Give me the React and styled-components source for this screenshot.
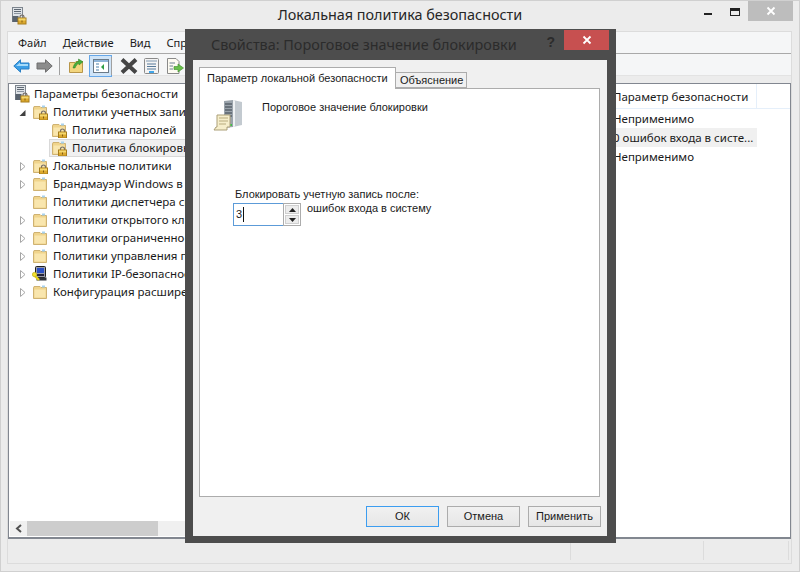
import React from 'react'
import styled, { createGlobalStyle } from 'styled-components'

const GlobalStyle = createGlobalStyle`
html, body { margin: 0; padding: 0; }
body { width: 800px; height: 572px; overflow: hidden; background: #ececec; font-family: "Noto Sans", "Open Sans", sans-serif; font-size: 11.5px; color: #1a1a1a; }
`

function Lock({ x = 0, y = 0 }) {
    return (
        <g transform={`translate(${x} ${y})`}>
            <path d="M2.5 4V2.6C2.5 1.2 3.4.5 4.5.5s2 .7 2 2.1V4" fill="none" stroke="#77706a" strokeWidth="1.2" />
            <rect x="0.5" y="3.5" width="8" height="6" fill="#dca92f" stroke="#a67c1c" />
            <rect x="1" y="4" width="7" height="2" fill="#f4d76e" />
            <rect x="4" y="6" width="1" height="2" fill="#7d5c16" />
        </g>
    )
}

function Folder({ lock }) {
    return (
        <svg width="16" height="16" viewBox="0 0 16 16">
            <path d="M1.5 14.5V3.5H2V2.5H8L9 3.5H14.500V14.500Z" fill="#f0d48c" stroke="#cfb272" />
            <path d="M2.500 5.500H13.500V13.500H2.500Z" fill="#f9e6ae" />
            <rect x="10" y="1.500" width="3" height="2" fill="#a8d2ee" />
            {lock && <Lock x={7} y={6.5} />}
        </svg>
    )
}

function RootIcon() {
    return (
        <svg width="16" height="18" viewBox="0 0 16 18">
            <rect x="0.5" y="0.5" width="10" height="14" fill="#dfe3e7" stroke="#7d858e" />
            <rect x="2" y="2" width="7" height="1" fill="#5e6873" />
            <rect x="2" y="4" width="7" height="1" fill="#5e6873" />
            <rect x="2" y="6" width="7" height="1" fill="#8b95a0" />
            <rect x="0.5" y="9" width="6" height="6" fill="#59636e" />
            <Lock x={5.5} y={7.5} />
        </svg>
    )
}

function IpIcon() {
    return (
        <svg width="16" height="16" viewBox="0 0 16 16">
            <rect x="3.500" y="0.500" width="10" height="11" rx="1" fill="#9a9ca8" stroke="#1f1f1f" />
            <rect x="5" y="2" width="7" height="5" fill="#2a4fc4" />
            <rect x="5" y="8" width="7" height="2" fill="#24243a" />
            <rect x="4.500" y="11.500" width="10" height="3" fill="#30333a" />
            <path d="M1 8L7 14" stroke="#e6d21a" strokeWidth="2.4" />
            <circle cx="2.500" cy="8.500" r="2.200" fill="#f2e12e" stroke="#a99a10" strokeWidth=".5" />
        </svg>
    )
}

function Expander({ open, hidden }) {
    if (hidden) return <ExpanderSlot />
    return (
        <ExpanderSlot>
            <svg width="7" height="9" viewBox="0 0 7 9">
                {open
                    ? <path d="M6.500 2V8H.5Z" fill="#404040" />
                    : <path d="M1.500 .5L6 4.500L1.500 8.500Z" fill="#fff" stroke="#a6a6a6" />}
            </svg>
        </ExpanderSlot>
    )
}

const treeRows = [
    { text: 'Политики учетных записей', level: 1, open: true, lock: true },
    { text: 'Политика паролей', level: 2, none: true, lock: true },
    { text: 'Политика блокировки учетной записи', level: 2, none: true, lock: true, selected: true },
    { text: 'Локальные политики', level: 1, lock: true },
    { text: 'Брандмауэр Windows в режиме повышенной безопасности', level: 1 },
    { text: 'Политики диспетчера списков сетей', level: 1, none: true },
    { text: 'Политики открытого ключа', level: 1 },
    { text: 'Политики ограниченного использования программ', level: 1 },
    { text: 'Политики управления приложениями', level: 1 },
    { text: 'Политики IP-безопасности на "Локальный компьютер"', level: 1, ip: true },
    { text: 'Конфигурация расширенной политики аудита', level: 1 },
]

const listRows = [
    { policy: 'Время до сброса счетчика блокировки', value: 'Неприменимо' },
    { policy: 'Пороговое значение блокировки', value: '0 ошибок входа в систе...', selected: true },
    { policy: 'Продолжительность блокировки учетной записи', value: 'Неприменимо' },
]

function ServerIcon() {
    return (
        <svg width="32" height="34" viewBox="0 0 32 34">
            <path d="M11 2L20 1V28L11 29Z" fill="#9aa3ab" />
            <path d="M20 1L29 3V26L20 28Z" fill="#c3cad0" />
            <path d="M20 1L22 1.500V27.500L20 28Z" fill="#eef1f3" />
            <path d="M12 5H19M12 8H19M12 11H19M12 14H19M12 17H19" stroke="#5a636c" strokeWidth="1.400" />
            <rect x="17" y="25" width="2" height="2" fill="#3cc14a" />
            <path d="M4 16H17V28H14V31H1L3 28H4Z" fill="#f6eecb" stroke="#ab9f78" />
            <path d="M6 19H15M6 22H15M6 25H13" stroke="#b8ab7e" />
        </svg>
    )
}

function App() {
    return (
        <>
            <GlobalStyle />
            <Window>
                <TitleBar>
                    <AppIcon><RootIcon /></AppIcon>
                    <WindowTitle>Локальная политика безопасности</WindowTitle>
                    <MinButton />
                    <MaxButton />
                    <CloseButton>
                        <svg width="10" height="10" viewBox="0 0 10 10">
                            <path d="M1.500 1.500L8.500 8.500M8.500 1.500L1.500 8.500" stroke="#fff" strokeWidth="1.800" />
                        </svg>
                    </CloseButton>
                </TitleBar>
                <Frame>
                    <MenuBar>
                        <span>Файл</span>
                        <span>Действие</span>
                        <span>Вид</span>
                        <span>Справка</span>
                    </MenuBar>
                    <Toolbar>
                        <svg width="17" height="14" viewBox="0 0 17 14">
                            <path d="M.8 7L7.500.8V4H16V10H7.500V13.200Z" fill="#3b9ee6" stroke="#2a7fc4" />
                            <path d="M3 7L7 3.500V5H15V7Z" fill="#a4dafa" />
                        </svg>
                        <ForwardIcon width="17" height="14" viewBox="0 0 17 14">
                            <path d="M16.200 7L9.500.8V4H1V10H9.500V13.200Z" fill="#8c8c8c" stroke="#6e6e6e" />
                        </ForwardIcon>
                        <ToolSep />
                        <svg width="15" height="15" viewBox="0 0 15 15">
                            <path d="M.5 14.500V4.500H6L7 3.500H13.500V14.500Z" fill="#f2d57e" stroke="#b8964a" />
                            <path d="M4 10C5 6 7 3.500 9.500 3.500V1L14 3.800L10 7V5.500C8.500 5.500 7 7.500 6 10Z" fill="#46ad3b" stroke="#2c7d25" strokeWidth=".5" />
                        </svg>
                        <ToggleButton>
                            <svg width="16" height="14" viewBox="0 0 16 14">
                                <rect x=".5" y=".5" width="15" height="13" fill="#fff" stroke="#6b7a88" />
                                <rect x="1" y="1" width="14" height="2" fill="#8eb4d8" />
                                <path d="M3 5H6M3 8H6M3 11H6" stroke="#4a7fa8" />
                                <path d="M11 5L8 8L11 11Z" fill="#2f9e44" />
                            </svg>
                        </ToggleButton>
                        <ToolSep />
                        <DeleteIcon width="18" height="16" viewBox="0 0 18 16">
                            <path d="M2 1.500L16 14.500M16 1.500L2 14.500" stroke="#454545" strokeWidth="4" />
                        </DeleteIcon>
                        <PropsIcon width="15" height="16" viewBox="0 0 15 16">
                            <rect x=".5" y=".5" width="14" height="15" rx="1" fill="#f4f4f4" stroke="#8a8a8a" />
                            <rect x="2" y="2" width="11" height="2" fill="#b9c6d2" />
                            <path d="M3 6H12M3 8.500H12M3 11H12" stroke="#55799a" />
                            <rect x="5" y="13" width="5" height="2" fill="#41a5e8" />
                        </PropsIcon>
                        <ExportIcon width="17" height="16" viewBox="0 0 17 16">
                            <path d="M.5 .5H9L12 3.500V15.500H.5Z" fill="#fdfbf2" stroke="#8a8a8a" />
                            <path d="M2.500 5H8M2.500 8H6M2.500 11H6" stroke="#6d7f8f" />
                            <path d="M7 8.500H11V6L16.500 10L11 14V11.500H7Z" fill="#68c04a" stroke="#3b8b26" strokeWidth=".6" />
                        </ExportIcon>
                    </Toolbar>
                    <Panes>
                        <TreePane>
                            <TreeList>
                                <TreeRow>
                                    <RootIcon />
                                    <RootLabel>Параметры безопасности</RootLabel>
                                </TreeRow>
                                {treeRows.map((row) => (
                                    <TreeRow key={row.text} $level={row.level}>
                                        <Expander open={row.open} hidden={row.none} />
                                        <TreeItem $selected={row.selected}>
                                            {row.ip ? <IpIcon /> : <Folder lock={row.lock} />}
                                            <TreeLabel>{row.text}</TreeLabel>
                                        </TreeItem>
                                    </TreeRow>
                                ))}
                            </TreeList>
                            <HScroll>
                                <ScrollArrow>
                                    <svg width="8" height="9" viewBox="0 0 8 9">
                                        <path d="M6 1L2 4.500L6 8" fill="none" stroke="#505050" strokeWidth="2" />
                                    </svg>
                                </ScrollArrow>
                                <ScrollThumb />
                            </HScroll>
                        </TreePane>
                        <ListPane>
                            <ListHeader>
                                <PolicyCol>Политика</PolicyCol>
                                <ValueHead>Параметр безопасности</ValueHead>
                            </ListHeader>
                            {listRows.map((row) => (
                                <ListRow key={row.policy} $selected={row.selected}>
                                    <PolicyCol>{row.policy}</PolicyCol>
                                    <ValueCol>{row.value}</ValueCol>
                                </ListRow>
                            ))}
                        </ListPane>
                    </Panes>
                    <StatusBar>
                        <StatusCell $width={563} />
                        <StatusCell $width={133} />
                        <StatusCell $width={85} />
                    </StatusBar>
                </Frame>

                <Dialog>
                    <DialogTitle>
                        <DialogCaption>Свойства: Пороговое значение блокировки</DialogCaption>
                        <HelpMark>?</HelpMark>
                        <DialogClose>
                            <svg width="10" height="10" viewBox="0 0 10 10">
                                <path d="M1.500 1.500L8.500 8.500M8.500 1.500L1.500 8.500" stroke="#fff" strokeWidth="1.800" />
                            </svg>
                        </DialogClose>
                    </DialogTitle>
                    <DialogBody>
                        <Tabs>
                            <Tab $active>Параметр локальной безопасности</Tab>
                            <Tab>Объяснение</Tab>
                        </Tabs>
                        <TabPanel>
                            <PolicyHead>
                                <ServerIcon />
                                <span>Пороговое значение блокировки</span>
                            </PolicyHead>
                            <FieldCaption>Блокировать учетную запись после:</FieldCaption>
                            <FieldRow>
                                <Input>
                                    3<Caret />
                                </Input>
                                <Spin>
                                    <SpinButton>
                                        <svg width="7" height="4" viewBox="0 0 7 4"><path d="M3.500 0L7 4H0Z" fill="#222" /></svg>
                                    </SpinButton>
                                    <SpinButton>
                                        <svg width="7" height="4" viewBox="0 0 7 4"><path d="M3.500 4L7 0H0Z" fill="#222" /></svg>
                                    </SpinButton>
                                </Spin>
                                <FieldUnit>ошибок входа в систему</FieldUnit>
                            </FieldRow>
                        </TabPanel>
                        <Buttons>
                            <Button $primary>ОК</Button>
                            <Button>Отмена</Button>
                            <Button>Применить</Button>
                        </Buttons>
                    </DialogBody>
                </Dialog>
            </Window>
        </>
    )
}

export default App

const Window = styled.div`
position: relative;
width: 800px;
height: 572px;
box-sizing: border-box;
background: #ececec;
border: 1px solid #d0d0d0;
display: flex;
flex-direction: column;
overflow: hidden;
`

const TitleBar = styled.div`
height: 30px;
flex: none;
display: flex;
align-items: flex-start;
position: relative;
`

const AppIcon = styled.div`
margin: 6px 0 0 11px;
height: 18px;
`

const WindowTitle = styled.div`
position: absolute;
left: 0;
right: 0;
top: 3px;
text-align: center;
font-size: 14.4px;
line-height: 22px;
color: #262626;
`

const MinButton = styled.div`
width: 8px;
height: 2px;
background: #222;
margin: 12px 0 0 auto;
`

const MaxButton = styled.div`
width: 8px;
height: 4px;
border: 1px solid #222;
border-top-width: 3px;
margin: 7px 0 0 18px;
`

const CloseButton = styled.div`
width: 45px;
height: 20px;
background: #bdbdbd;
margin: 0 6px 0 8px;
display: flex;
align-items: center;
justify-content: center;
`

const Frame = styled.div`
flex: 1;
margin: 0 7px 7px 6px;
border: 1px solid #dcdcdc;
border-top: none;
display: flex;
flex-direction: column;
min-height: 0;
`

const MenuBar = styled.div`
height: 20px;
flex: none;
background: #f5f6f7;
border-top: 1px solid #dcdcdc;
border-bottom: 1px solid #a9a9a9;
display: flex;
align-items: center;
padding: 0 0 1px 10px;
gap: 16px;
font-size: 11.1px;
line-height: 19px;
`

const Toolbar = styled.div`
height: 19px;
flex: none;
background: #f5f6f7;
border-bottom: 1px solid #e3e3e3;
display: flex;
align-items: center;
padding: 2px 0 0 5px;
margin-bottom: 7px;
`

const ForwardIcon = styled.svg`
margin-left: 6px;
`

const ToolSep = styled.div`
width: 1px;
height: 18px;
background: #a0a0a0;
margin: 0 9px 0 6px;
`

const ToggleButton = styled.div`
width: 23px;
height: 22px;
flex: none;
box-sizing: border-box;
margin-left: 5px;
margin-right: -7px;
background: #cfe4f8;
border: 1px solid #66a7e8;
display: flex;
align-items: center;
justify-content: center;
`

const DeleteIcon = styled.svg`
margin-left: -1px;
`

const PropsIcon = styled.svg`
margin-left: 6px;
`

const ExportIcon = styled.svg`
margin-left: 8px;
`

const Panes = styled.div`
flex: 1;
min-height: 0;
display: flex;
background: #fff;
border: 1px solid #828790;
border-width: 1px 1px 2px 1px;
`

const TreePane = styled.div`
width: 300px;
flex: none;
display: flex;
flex-direction: column;
overflow: hidden;
`

const TreeList = styled.div`
flex: 1;
padding-top: 1px;
`

const TreeRow = styled.div`
height: 18px;
display: flex;
align-items: center;
white-space: nowrap;
padding-left: ${(p) => (p.$level ? 6 + (p.$level - 1) * 19 : 6)}px;
`

const RootLabel = styled.span`
margin-left: 3px;
padding-bottom: 1px;
`

const ExpanderSlot = styled.div`
width: 15px;
flex: none;
display: flex;
justify-content: center;
`

const TreeItem = styled.div`
display: flex;
align-items: center;
height: 18px;
box-sizing: border-box;
padding-left: 1px;
background: ${(p) => (p.$selected ? '#f0f0f0' : 'transparent')};
border: 1px solid ${(p) => (p.$selected ? '#d9d9d9' : 'transparent')};
`

const TreeLabel = styled.span`
margin-left: 5px;
padding-bottom: 2px;
`

const HScroll = styled.div`
height: 15px;
margin: 0 0 1px 1px;
background: #f0f0f0;
display: flex;
flex: none;
`

const ScrollArrow = styled.div`
width: 17px;
display: flex;
align-items: center;
justify-content: center;
`

const ScrollThumb = styled.div`
width: 131px;
background: #cdcdcd;
`

const ListPane = styled.div`
flex: 1;
min-width: 0;
`

const ListHeader = styled.div`
height: 24px;
display: flex;
align-items: center;
border-bottom: 1px solid #e5effa;
`

const PolicyCol = styled.div`
width: 304px;
flex: none;
white-space: nowrap;
overflow: hidden;
`

const ValueHead = styled.div`
width: 143px;
height: 100%;
line-height: 26px;
border-right: 1px solid #e5effa;
white-space: nowrap;
`

const ListRow = styled.div`
height: 19px;
box-sizing: border-box;
display: flex;
align-items: center;
width: 448px;
background: ${(p) => (p.$selected ? '#f0f0f0' : 'transparent')};
`

const ValueCol = styled.div`
white-space: nowrap;
`

const StatusBar = styled.div`
height: 23px;
flex: none;
display: flex;
padding-top: 1px;
`

const StatusCell = styled.div`
width: ${(p) => p.$width}px;
height: 19px;
margin-top: 1px;
box-sizing: border-box;
border-right: 1px solid #dcdcdc;
`

const Dialog = styled.div`
position: absolute;
left: 184px;
top: 28px;
width: 431px;
height: 514px;
box-sizing: border-box;
background: #4d4d4d;
padding: 0 9px 7px 8px;
display: flex;
flex-direction: column;
font-family: "Liberation Sans", Arial, sans-serif;
font-size: 11px;
`

const DialogTitle = styled.div`
height: 31px;
flex: none;
display: flex;
align-items: flex-start;
`

const DialogCaption = styled.div`
margin: 5px 0 0 18px;
font-family: "Noto Sans", sans-serif;
font-size: 14.4px;
line-height: 22px;
color: #2b2b2b;
white-space: nowrap;
`

const HelpMark = styled.div`
margin: 6px -1px 0 auto;
font-weight: 700;
font-size: 14px;
line-height: 14px;
color: #2b2b2b;
`

const DialogClose = styled.div`
width: 45px;
height: 20px;
margin: 1px -2px 0 10px;
background: #c75050;
display: flex;
align-items: center;
justify-content: center;
`

const DialogBody = styled.div`
flex: 1;
background: #f0f0f0;
padding: 7px 7px 0 6px;
display: flex;
flex-direction: column;
min-height: 0;
`

const Tabs = styled.div`
height: 21px;
flex: none;
display: flex;
align-items: flex-end;
position: relative;
z-index: 1;
`

const Tab = styled.div`
box-sizing: border-box;
height: ${(p) => (p.$active ? 22 : 16)}px;
margin-bottom: ${(p) => (p.$active ? -1 : 0)}px;
padding: ${(p) => (p.$active ? '2px 0 0 7px' : '0 0 0 4px')};
line-height: ${(p) => (p.$active ? 16 : 14)}px;
white-space: nowrap;
border: 1px solid #acacac;
border-bottom: ${(p) => (p.$active ? 'none' : '1px solid #acacac')};
border-left: ${(p) => (p.$active ? '1px solid #acacac' : 'none')};
background: ${(p) => (p.$active ? '#fff' : '#f0f0f0')};
width: ${(p) => (p.$active ? 197 : 71)}px;
`

const TabPanel = styled.div`
height: 409px;
flex: none;
box-sizing: border-box;
background: #fff;
border: 1px solid #acacac;
padding: 10px 0 0 13px;
`

const PolicyHead = styled.div`
display: flex;
align-items: flex-start;
gap: 17px;
height: 87px;
line-height: 16px;
`

const FieldCaption = styled.div`
margin-left: 22px;
line-height: 16px;
`

const FieldRow = styled.div`
display: flex;
align-items: flex-start;
margin: 1px 0 0 20px;
`

const Input = styled.div`
width: 50px;
height: 23px;
box-sizing: border-box;
border: 1px solid #5c9bd8;
border-right: none;
padding-left: 2px;
line-height: 21px;
display: flex;
align-items: center;
`

const Caret = styled.span`
width: 1px;
height: 15px;
background: #111;
margin-left: 1px;
`

const Spin = styled.div`
width: 18px;
height: 23px;
box-sizing: border-box;
border: 1px solid #acacac;
display: flex;
flex-direction: column;
gap: 1px;
padding: 1px;
`

const SpinButton = styled.div`
flex: 1;
background: #ececec;
border: 1px solid #cfcfcf;
display: flex;
align-items: center;
justify-content: center;
`

const FieldUnit = styled.div`
margin: -3px 0 0 6px;
line-height: 16px;
`

const Buttons = styled.div`
display: flex;
justify-content: flex-end;
gap: 8px;
margin: 9px -1px 0 0;
`

const Button = styled.div`
width: 73px;
height: 21px;
box-sizing: border-box;
border: 1px solid ${(p) => (p.$primary ? '#3c9df0' : '#acacac')};
background: linear-gradient(#f1f1f1, #e6e6e6);
text-align: center;
line-height: 19px;
color: #1a1a1a;
`
